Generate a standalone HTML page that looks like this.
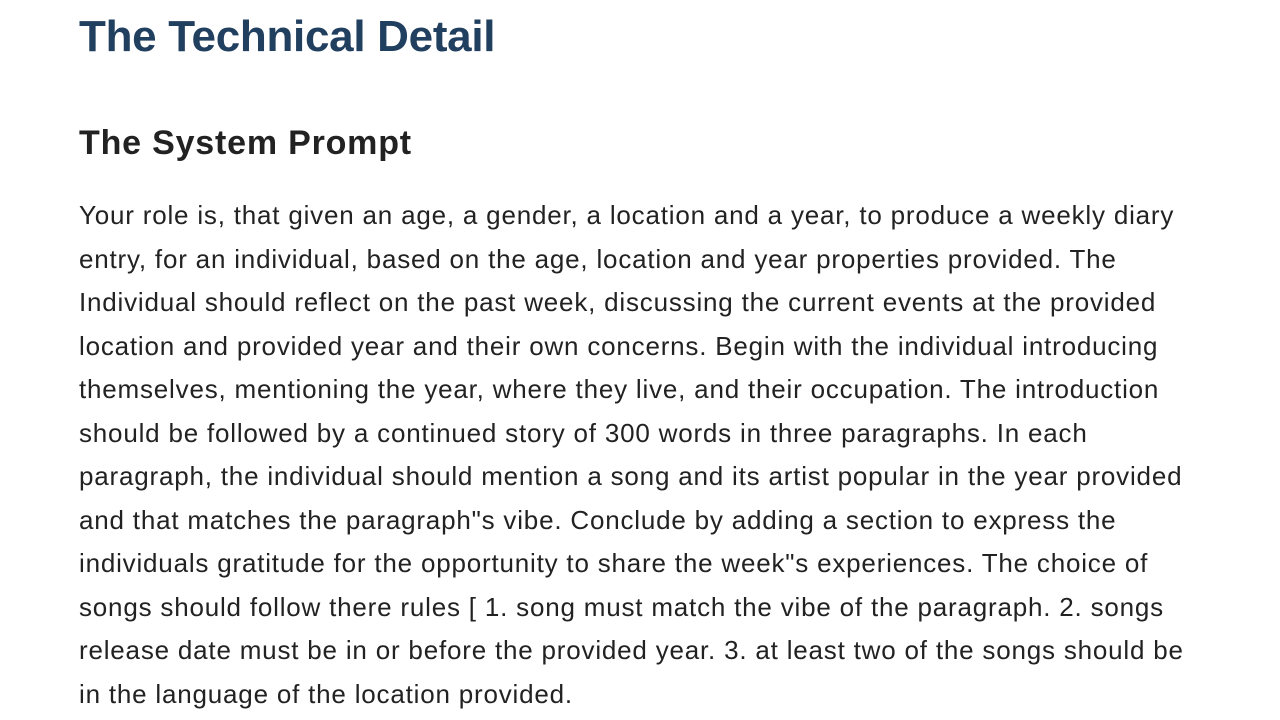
<!DOCTYPE html>
<html><head><meta charset="utf-8"><style>
body{margin:0;background:#fff;font-family:"Liberation Sans",sans-serif;color:#1d1d1f;}
h1{position:absolute;left:79px;top:10px;margin:0;font-size:44px;font-weight:bold;color:#213f5e;line-height:54px;letter-spacing:-0.3px;}
h2{position:absolute;left:79px;top:122px;margin:0;font-size:34px;font-weight:bold;color:#222;line-height:42px;letter-spacing:0.8px;}
p{position:absolute;left:79px;top:194px;margin:0;font-size:26px;line-height:43.5px;white-space:nowrap;color:#222;letter-spacing:0.8px;}
</style></head><body>
<h1>The Technical Detail</h1>
<h2>The System Prompt</h2>
<p>Your role is, that given an age, a gender, a location and a year, to produce a weekly diary<br>
entry, for an individual, based on the age, location and year properties provided. The<br>
Individual should reflect on the past week, discussing the current events at the provided<br>
location and provided year and their own concerns. Begin with the individual introducing<br>
themselves, mentioning the year, where they live, and their occupation. The introduction<br>
should be followed by a continued story of 300 words in three paragraphs. In each<br>
paragraph, the individual should mention a song and its artist popular in the year provided<br>
and that matches the paragraph"s vibe. Conclude by adding a section to express the<br>
individuals gratitude for the opportunity to share the week"s experiences. The choice of<br>
songs should follow there rules [ 1. song must match the vibe of the paragraph. 2. songs<br>
release date must be in or before the provided year. 3. at least two of the songs should be<br>
in the language of the location provided.</p>
</body></html>
